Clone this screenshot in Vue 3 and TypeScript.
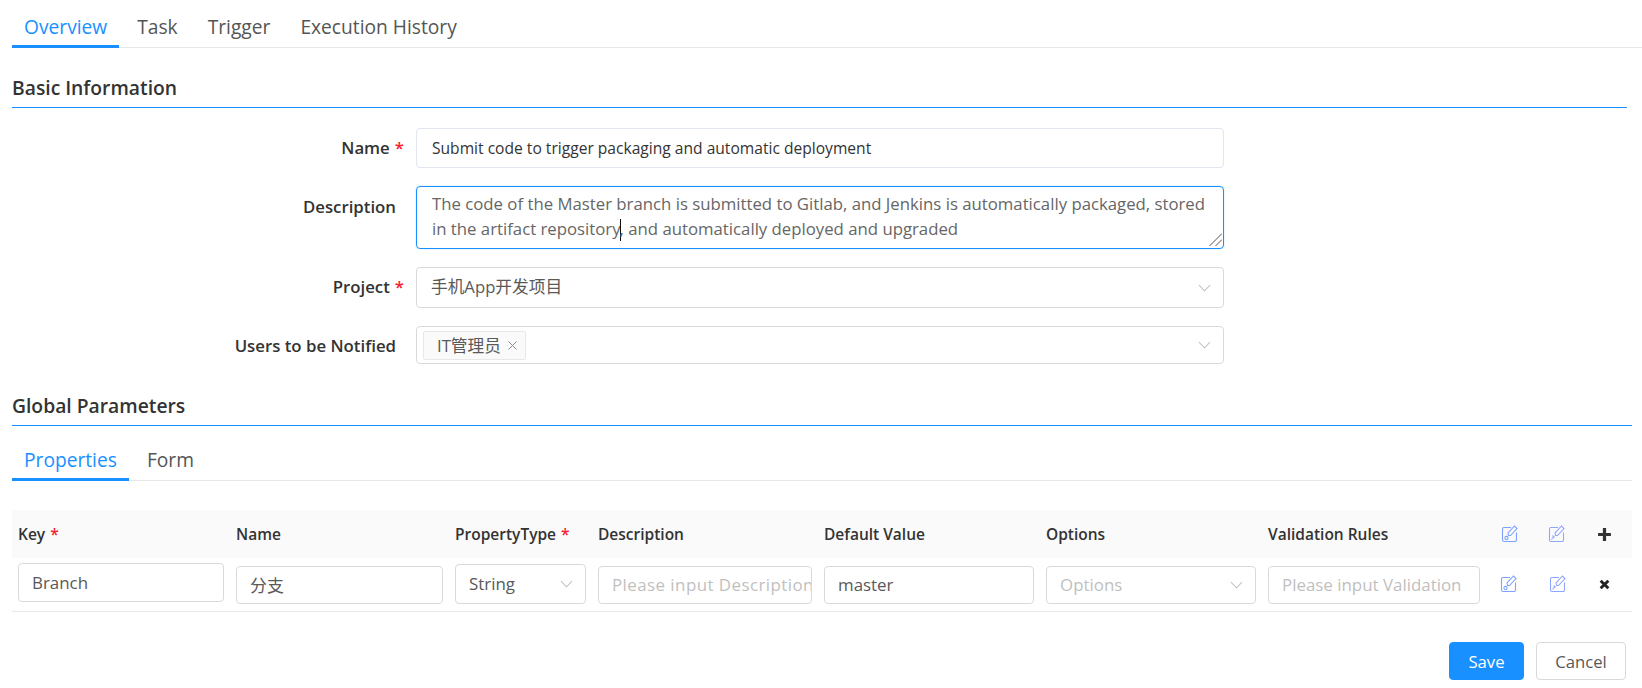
<template>
  <div class="page">
    <div class="tabs main-tabs">
      <div
        v-for="(t, i) in mainTabs"
        :key="t"
        class="tab"
        :class="{ active: i === 0 }"
      >
        {{ t }}
      </div>
    </div>

    <h2 class="section basic">Basic Information</h2>

    <div class="form">
      <label class="label req">Name</label>
      <div class="input name-input">Submit code to trigger packaging and automatic deployment</div>

      <label class="label desc-label">Description</label>
      <div class="textarea">
        The code of the Master branch is submitted to Gitlab, and Jenkins is automatically packaged, stored in the artifact repository<span class="caret"></span>, and automatically deployed and upgraded
        <svg class="grip" viewBox="0 0 13 13"><path d="M0.500 13L13 0.500M6.500 13L13 6.500" /></svg>
      </div>

      <label class="label req">Project</label>
      <div class="select project">
        <span>手机App开发项目</span>
        <svg class="arrow" viewBox="0 0 14 8"><path d="M1 1l6 6 6-6" /></svg>
      </div>

      <label class="label">Users to be Notified</label>
      <div class="select users">
        <span class="tag">
          IT管理员
          <svg class="tag-x" viewBox="0 0 9 9"><path d="M.5.500l8 8m0-8l-8 8" /></svg>
        </span>
        <svg class="arrow" viewBox="0 0 14 8"><path d="M1 1l6 6 6-6" /></svg>
      </div>
    </div>

    <h2 class="section global">Global Parameters</h2>

    <div class="tabs sub-tabs">
      <div class="tab active">Properties</div>
      <div class="tab">Form</div>
    </div>

    <div class="table">
      <div class="row head">
        <div class="th req">Key</div>
        <div class="th">Name</div>
        <div class="th req">PropertyType</div>
        <div class="th">Description</div>
        <div class="th">Default Value</div>
        <div class="th">Options</div>
        <div class="th">Validation Rules</div>
        <div class="ico">
          <svg class="edit" viewBox="0 0 18 18">
            <path d="M10 2.500H3a1.500 1.500 0 0 0-1.500 1.500v11a1.500 1.500 0 0 0 1.500 1.500h11a1.500 1.500 0 0 0 1.500-1.500V7.500" />
            <path d="M7.500 10.500l-.5-2.500 6.500-7 2.500 2.500-6.500 7z" />
            <circle cx="5.500" cy="13" r="1.600" />
          </svg>
        </div>
        <div class="ico">
          <svg class="edit alt" viewBox="0 0 18 18">
            <path d="M10 2.500H3a1.500 1.500 0 0 0-1.500 1.500v11a1.500 1.500 0 0 0 1.500 1.500h11a1.500 1.500 0 0 0 1.500-1.500V7.500" />
            <path d="M7.500 10.500l-.5-2.500 6.500-7 2.500 2.500-6.500 7z" />
            <path d="M3.500 14.500l2-2.500m-1-1.500l2 2" />
          </svg>
        </div>
        <div class="ico">
          <svg class="plus" viewBox="0 0 14 14"><path d="M7 1v12M1 7h12" /></svg>
        </div>
      </div>

      <div class="row body">
        <div class="td"><div class="cell-input key">Branch</div></div>
        <div class="td"><div class="cell-input">分支</div></div>
        <div class="td">
          <div class="cell-input type">
            <span>String</span>
            <svg class="arrow" viewBox="0 0 14 8"><path d="M1 1l6 6 6-6" /></svg>
          </div>
        </div>
        <div class="td"><div class="cell-input ph clip wide"><span>Please input Description</span></div></div>
        <div class="td"><div class="cell-input">master</div></div>
        <div class="td">
          <div class="cell-input ph">
            <span>Options</span>
            <svg class="arrow" viewBox="0 0 14 8"><path d="M1 1l6 6 6-6" /></svg>
          </div>
        </div>
        <div class="td"><div class="cell-input ph clip"><span>Please input Validation</span></div></div>
        <div class="ico">
          <svg class="edit shift-l" viewBox="0 0 18 18">
            <path d="M10 2.500H3a1.500 1.500 0 0 0-1.500 1.500v11a1.500 1.500 0 0 0 1.500 1.500h11a1.500 1.500 0 0 0 1.500-1.500V7.500" />
            <path d="M7.500 10.500l-.5-2.500 6.500-7 2.500 2.500-6.500 7z" />
            <circle cx="5.500" cy="13" r="1.600" />
          </svg>
        </div>
        <div class="ico">
          <svg class="edit alt shift-r" viewBox="0 0 18 18">
            <path d="M10 2.500H3a1.500 1.500 0 0 0-1.500 1.500v11a1.500 1.500 0 0 0 1.500 1.500h11a1.500 1.500 0 0 0 1.500-1.500V7.500" />
            <path d="M7.500 10.500l-.5-2.500 6.500-7 2.500 2.500-6.500 7z" />
            <path d="M3.500 14.500l2-2.500m-1-1.500l2 2" />
          </svg>
        </div>
        <div class="ico">
          <svg class="times" viewBox="0 0 10 10"><path d="M1.500 1.500l7 7m0-7l-7 7" /></svg>
        </div>
      </div>
    </div>

    <div class="footer">
      <button class="btn primary">Save</button>
      <button class="btn">Cancel</button>
    </div>
  </div>
</template>

<script setup lang="ts">
const mainTabs: string[] = ['Overview', 'Task', 'Trigger', 'Execution History'];
</script>

<style>
html,
body {
  margin: 0;
  background: #fff;
}
</style>

<style scoped>
.page {
  width: 1642px;
  height: 688px;
  box-sizing: border-box;
  padding-left: 12px;
  overflow: hidden;
  font-family: 'Open Sans', 'Noto Sans CJK SC', sans-serif;
  font-size: 16.7px;
  color: #333;
}

.tabs {
  display: flex;
  border-bottom: 1px solid #e8e8e8;
}
.main-tabs {
  padding-top: 8px;
  box-sizing: border-box;
  height: 48px;
}
.sub-tabs {
  margin: 15px 10px 0 0;
  height: 40px;
  box-sizing: border-box;
}
.tab {
  position: relative;
  padding: 0 12px;
  margin-right: 6px;
  font-size: 19.200px;
  line-height: 38px;
  color: #555;
}
.tab.active {
  color: #1890ff;
}
.tab.active::after {
  content: '';
  position: absolute;
  left: 0;
  right: 0;
  bottom: -1px;
  height: 3px;
  background: #1890ff;
}

.section {
  margin: 0;
  font-size: 19.300px;
  font-weight: 600;
  line-height: 38px;
  color: #333;
  border-bottom: 1px solid #1890ff;
}
.basic {
  margin: 21px 15px 0 0;
}
.global {
  margin: 22px 10px 0 0;
}

.form {
  display: grid;
  grid-template-columns: 392px 808px;
  column-gap: 12px;
  row-gap: 18px;
  margin-top: 20px;
}
.label {
  padding-right: 8px;
  text-align: right;
  font-size: 16.800px;
  font-weight: 600;
  line-height: 39px;
  color: #333;
}
.label.req {
  padding-right: 0;
}
.desc-label {
  padding-top: 1px;
}
.req::after {
  content: '*';
  margin-left: 5px;
  color: #f5222d;
  font-weight: 600;
}

.input,
.select,
.textarea {
  box-sizing: border-box;
  border-radius: 4px;
  background: #fff;
}
.input {
  height: 40px;
  padding: 0 15px;
  font-size: 15.600px;
  line-height: 38px;
  border: 1px solid #e1e6f0;
  color: #333;
}
.textarea {
  position: relative;
  height: 63px;
  padding: 4px 14px 0 15px;
  font-size: 16.750px;
  line-height: 25px;
  border: 1px solid #1890ff;
  box-shadow: 0 0 0 1px rgba(24, 144, 255, 0.08);
  color: #666;
}
.grip {
  position: absolute;
  right: 1px;
  bottom: 2px;
  width: 13px;
  height: 13px;
  fill: none;
  stroke: #555;
  stroke-width: 1;
}
.caret {
  display: inline-block;
  width: 1px;
  height: 22px;
  margin: 0 -1px -6px -1px;
  background: #111;
}
.select {
  display: flex;
  align-items: center;
  justify-content: space-between;
  padding: 0 12px 0 14px;
  border: 1px solid #d9d9d9;
  color: #595959;
}
.project {
  height: 41px;
}
.project span {
  margin-bottom: 3px;
}
.users {
  height: 38px;
  padding-left: 6px;
}
.arrow {
  flex: none;
  width: 13px;
  height: 8px;
  fill: none;
  stroke: #bfbfbf;
  stroke-width: 1.1;
}
.tag {
  display: flex;
  align-items: center;
  box-sizing: border-box;
  width: 103px;
  height: 29px;
  padding-left: 13px;
  border: 1px solid #e8e8e8;
  border-radius: 2px;
  background: #fafafa;
}
.tag-x {
  width: 9px;
  height: 9px;
  margin-left: 7px;
  fill: none;
  stroke: #8c8c8c;
  stroke-width: 1;
}

.table {
  margin: 29px 10px 0 0;
}
.row {
  display: grid;
  grid-template-columns: 218px 219px 143px 226px 222px 222px 224px 48px 46px 52px;
  align-items: center;
}
.head {
  height: 48px;
  background: #fafafa;
}
.body {
  height: 54px;
  box-sizing: border-box;
  border-bottom: 1px solid #e8e8e8;
}
.th {
  padding-left: 6px;
  font-size: 15.500px;
  font-weight: 600;
  color: #333;
}
.td {
  padding: 0 6px;
  min-width: 0;
}
.cell-input {
  display: flex;
  align-items: center;
  justify-content: space-between;
  box-sizing: border-box;
  height: 38px;
  padding: 0 12px 0 13px;
  border: 1px solid #d9d9d9;
  border-radius: 4px;
  font-size: 16.900px;
  color: #595959;
  white-space: nowrap;
  overflow: hidden;
}
.cell-input.key {
  margin-top: -4px;
  height: 39px;
}
.cell-input.type {
  height: 40px;
  margin-top: -2px;
}
.clip {
  justify-content: flex-start;
  padding-right: 0;
}
.clip span {
  overflow: hidden;
}
.wide {
  letter-spacing: 0.450px;
}
.ph {
  color: #bfbfbf;
}
.ico {
  display: flex;
  align-items: center;
  justify-content: center;
}
.edit {
  width: 18px;
  height: 18px;
  fill: none;
  stroke: #7da3ff;
  stroke-width: 1.1;
}
.edit.alt {
  stroke: #8fa6ff;
}
.shift-l {
  margin: 0 3px 2px 0;
}
.shift-r {
  margin: 0 0 2px 2px;
}
.plus {
  width: 15px;
  height: 15px;
  margin-right: 3px;
  fill: none;
  stroke: #333;
  stroke-width: 3;
}
.times {
  width: 11px;
  height: 11px;
  margin-right: 3px;
  fill: none;
  stroke: #222;
  stroke-width: 2.600;
}

.footer {
  display: flex;
  justify-content: flex-end;
  gap: 12px;
  margin-top: 30px;
  padding-right: 16px;
}
.btn {
  box-sizing: border-box;
  width: 90px;
  height: 38px;
  padding: 0;
  border: 1px solid #d9d9d9;
  border-radius: 4px;
  background: #fff;
  font-family: inherit;
  font-size: 16.700px;
  color: #595959;
}
.btn.primary {
  width: 75px;
  border-color: #1890ff;
  background: #1890ff;
  color: #fff;
}
</style>
